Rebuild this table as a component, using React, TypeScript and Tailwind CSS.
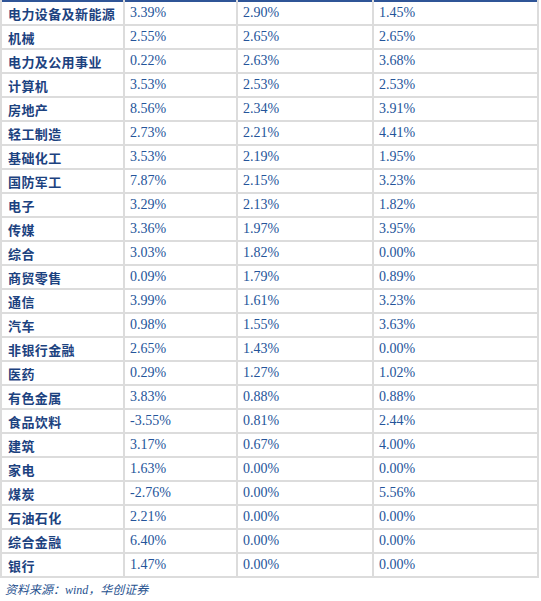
const rows: [string, string, string, string][] = [
  ["电力设备及新能源", "3.39%", "2.90%", "1.45%"],
  ["机械", "2.55%", "2.65%", "2.65%"],
  ["电力及公用事业", "0.22%", "2.63%", "3.68%"],
  ["计算机", "3.53%", "2.53%", "2.53%"],
  ["房地产", "8.56%", "2.34%", "3.91%"],
  ["轻工制造", "2.73%", "2.21%", "4.41%"],
  ["基础化工", "3.53%", "2.19%", "1.95%"],
  ["国防军工", "7.87%", "2.15%", "3.23%"],
  ["电子", "3.29%", "2.13%", "1.82%"],
  ["传媒", "3.36%", "1.97%", "3.95%"],
  ["综合", "3.03%", "1.82%", "0.00%"],
  ["商贸零售", "0.09%", "1.79%", "0.89%"],
  ["通信", "3.99%", "1.61%", "3.23%"],
  ["汽车", "0.98%", "1.55%", "3.63%"],
  ["非银行金融", "2.65%", "1.43%", "0.00%"],
  ["医药", "0.29%", "1.27%", "1.02%"],
  ["有色金属", "3.83%", "0.88%", "0.88%"],
  ["食品饮料", "-3.55%", "0.81%", "2.44%"],
  ["建筑", "3.17%", "0.67%", "4.00%"],
  ["家电", "1.63%", "0.00%", "0.00%"],
  ["煤炭", "-2.76%", "0.00%", "5.56%"],
  ["石油石化", "2.21%", "0.00%", "0.00%"],
  ["综合金融", "6.40%", "0.00%", "0.00%"],
  ["银行", "1.47%", "0.00%", "0.00%"],
];

export default function App() {
  return (
    <div className="w-[541px] h-[601px] bg-white">
      <table className="w-[537px] border-collapse table-fixed border-t-2 border-t-[#2f5597]">
        <colgroup>
          <col className="w-[123px]" />
          <col className="w-[113px]" />
          <col className="w-[136px]" />
          <col className="w-[165px]" />
        </colgroup>
        <tbody>
          {rows.map((r) => (
            <tr key={r[0]} className="h-[24px]">
              <td className="border-2 border-[#dcdcdc] border-t-0 pl-[6px] py-0 text-[13px] font-bold tracking-[0.4px] text-[#1c427f] font-['Noto_Sans_CJK_SC',sans-serif] leading-none whitespace-nowrap">
                {r[0]}
              </td>
              {r.slice(1).map((v, i) => (
                <td
                  key={i}
                  className="border-2 border-[#dcdcdc] border-t-0 pl-[5px] py-0 text-[14px] text-[#24549a] font-['Liberation_Serif',serif] leading-none"
                >
                  {v}
                </td>
              ))}
            </tr>
          ))}
        </tbody>
      </table>
      <div className="pl-[5px] pt-[3px] text-[12px] italic text-[#27528f] font-['Liberation_Serif','Noto_Sans_CJK_SC',serif]">
        资料来源：wind，华创证券
      </div>
    </div>
  );
}
